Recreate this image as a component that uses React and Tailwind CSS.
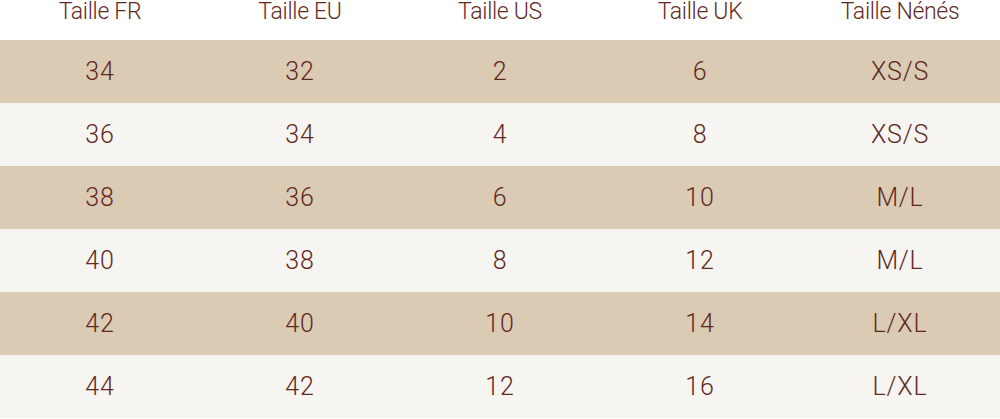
const HEADERS = ['Taille FR', 'Taille EU', 'Taille US', 'Taille UK', 'Taille Nénés'];

const ROWS = [
  ['34', '32', '2', '6', 'XS/S'],
  ['36', '34', '4', '8', 'XS/S'],
  ['38', '36', '6', '10', 'M/L'],
  ['40', '38', '8', '12', 'M/L'],
  ['42', '40', '10', '14', 'L/XL'],
  ['44', '42', '12', '16', 'L/XL'],
];

export default function App() {
  return (
    <div
      className="w-[1000px] h-[419px] bg-white text-[#62291d] font-light overflow-hidden"
      style={{ fontFamily: 'Roboto, "Liberation Sans", sans-serif' }}
    >
      <div className="grid grid-cols-5 h-[40px] items-start">
        {HEADERS.map(h => (
          <div key={h} className="text-center text-[23px] leading-[23px] tracking-[-0.3px]">
            {h}
          </div>
        ))}
      </div>
      {ROWS.map((row, i) => (
        <div
          key={i}
          className={`grid grid-cols-5 h-[63px] items-center ${i % 2 === 0 ? 'bg-[#dbcbb5]' : 'bg-[#f7f5f1]'}`}
        >
          {row.map((cell, j) => (
            <div key={j} className="text-center text-[25px] tracking-[0.8px]">
              {cell}
            </div>
          ))}
        </div>
      ))}
    </div>
  );
}
